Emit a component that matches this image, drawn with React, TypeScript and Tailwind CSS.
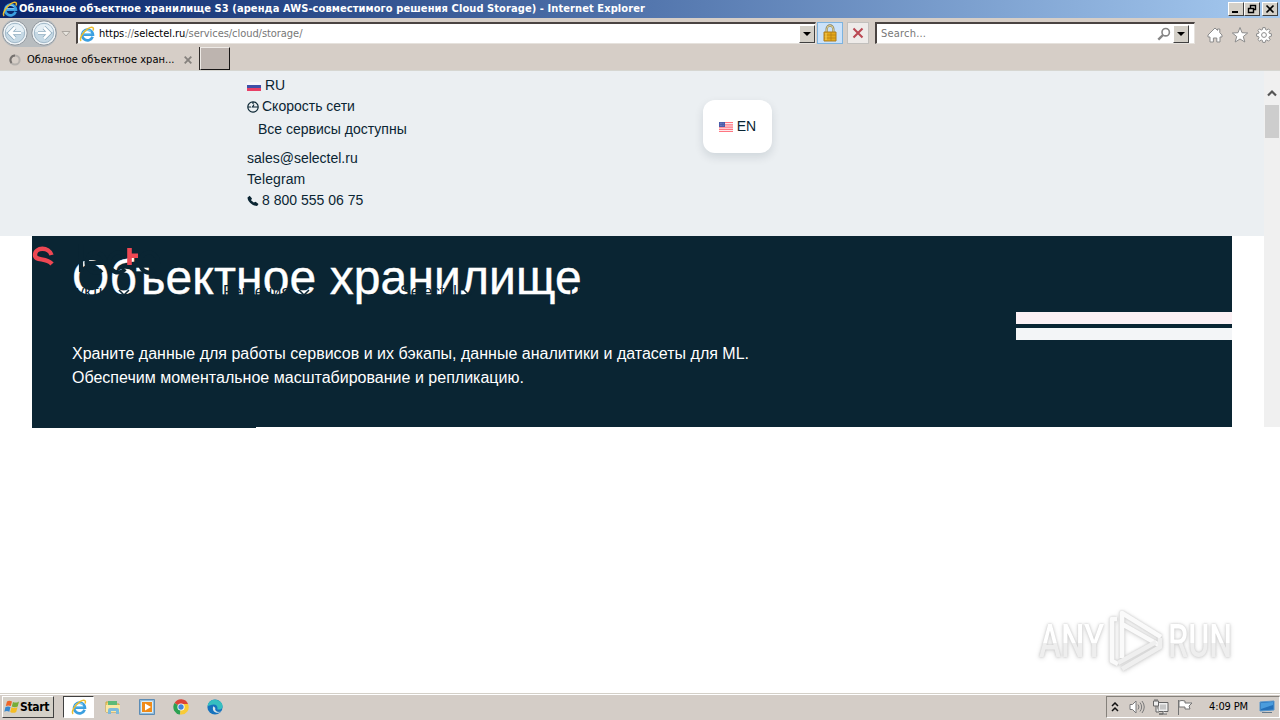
import type { ReactNode } from 'react';

const raised = 'border border-t-white border-l-white border-r-[#404040] border-b-[#404040] bg-[#d4d0c8]';

const IeLogo = ({ className = '' }: { className?: string }) => (
  <svg viewBox="0 0 16 16" className={`shrink-0 ${className}`} fill="none">
    <path d="M13.6 10.8A5.4 5.4 0 1 1 13.9 8.6H4.6" stroke="#3b9fe0" strokeWidth="2.7" />
    <path d="M4.3 7.7h8M3.5 6.5Q8 2.5 12 5.4" stroke="#8bd4f7" strokeWidth="1" />
    <path d="M2.2 14.8C-.2 13.6 3.3 6.2 9 2.6c3.8-2.4 6.4-1.6 5 2" stroke="#edbd2d" strokeWidth="1.5" />
  </svg>
);

const NavArrow = ({ flip = false }: { flip?: boolean }) => (
  <svg viewBox="0 0 26 26" className={flip ? 'size-[26px] -scale-x-100' : 'size-[26px]'}>
    <circle cx="13" cy="13" r="12.2" fill="#eef3f6" stroke="#8d949b" />
    <circle cx="13" cy="13" r="9.7" fill="#c6d9e5" stroke="#a1b8c8" />
    <path d="M4 12a9 8 0 0 1 18 0" fill="#e5eff5" />
    <path d="M13 7.5 7.5 13l5.5 5.5M8 13h11" fill="none" stroke="#8aa9bd" strokeWidth="4" />
    <path d="M13 7.5 7.5 13l5.5 5.5M8 13h11" fill="none" stroke="#fff" strokeWidth="2.6" />
  </svg>
);

const DropButton = () => (
  <span className={`flex h-[18px] w-4 items-center justify-center ${raised}`}>
    <svg viewBox="0 0 8 4" className="h-1 w-2"><path d="M0 0h8L4 4z" /></svg>
  </span>
);

const WindowButton = ({ children }: { children: ReactNode }) => (
  <span className={`flex h-[14px] w-4 items-center justify-center ${raised}`}>
    <svg viewBox="0 0 12 10" className="h-[10px] w-3" fill="none" stroke="#000">{children}</svg>
  </span>
);

const Chevron = () => (
  <svg viewBox="0 0 12 7" className="mt-[6px] h-[7px] w-3" fill="none" stroke="#0a2533" strokeWidth="1.6"><path d="m1 1 5 5 5-5" /></svg>
);

const TitleBar = () => (
  <div className="flex h-[18px] items-center bg-linear-to-r from-[#0a246a] to-[#a6caf0] pr-[2px] pl-[2px]">
    <IeLogo className="size-4" />
    <span className="ml-px w-[640px] text-[11px] leading-[18px] font-bold tracking-[0.085px] whitespace-nowrap text-white">
      Облачное объектное хранилище S3 (аренда AWS-совместимого решения Cloud Storage) - Internet Explorer
    </span>
    <div className="ml-auto flex">
      <WindowButton><path d="M2 8h6" strokeWidth="2" /></WindowButton>
      <WindowButton><path d="M4.5 4V1.5h5v4H8M4 1.5h6M2.5 4.5h5v4h-5zM2 4.5h6" strokeWidth="1.4" /></WindowButton>
      <span className="w-[2px]" />
      <WindowButton><path d="m2.5 1.5 7 7m0-7-7 7" strokeWidth="1.7" /></WindowButton>
    </div>
  </div>
);

const AddressBar = () => (
  <div className="flex h-[29px] items-start pt-1">
    <div className="-mt-[3px] ml-[2px] flex h-7 w-[55px] items-center justify-between rounded-full bg-[#b8bdc0]">
      <NavArrow />
      <NavArrow flip />
    </div>
    <svg viewBox="0 0 10 6" className="mt-[9px] ml-[4px] h-[6px] w-[10px]"><path d="M1 .5h8L5 5z" fill="#e8e5df" stroke="#aaa59f" /></svg>
    <div className="ml-[5px] flex h-[22px] w-[740px] items-center border-t-2 border-l-2 border-r border-b border-t-[#4a4442] border-l-[#4a4442] border-r-[#e6e2dd] border-b-[#e6e2dd] bg-white pl-px">
      <IeLogo className="size-4" />
      <span className="ml-[4px] pt-[2px] text-[11px] tracking-[-0.05px] whitespace-nowrap text-[#777]">
        <span className="text-black">https</span>://<span className="text-black">selectel.ru</span>/services/cloud/storage/
      </span>
      <span className="ml-auto"><DropButton /></span>
    </div>
    <div className="ml-px flex h-[22px] w-[26px] items-center justify-center border border-[#7db3df] bg-[#cbe2fa]">
      <svg viewBox="0 0 14 18" className="h-[18px] w-[14px]">
        <path d="M3.7 8V4.8a3.3 3.3 0 0 1 6.6 0V8" fill="none" stroke="#8a8060" strokeWidth="2.3" />
        <path d="M3.8 8V4.8a3.2 3.2 0 0 1 6.4 0V8" fill="none" stroke="#eadf9d" />
        <path d="M1 8h12v9H1z" fill="#e4a91b" stroke="#ad7d1c" />
        <path d="M1 11h12M1 14h12M8 8v9" stroke="#b88215" strokeWidth=".8" />
        <path d="M3 9v7" stroke="#f6d466" />
      </svg>
    </div>
    <div className="ml-1 flex h-[22px] w-[22px] items-center justify-center border border-[#c2c0bd] bg-[#eeebe9]">
      <svg viewBox="0 0 12 12" className="size-3"><path d="m1.5 1.5 9 9m0-9-9 9" stroke="#ba4853" strokeWidth="2.1" /></svg>
    </div>
    <div className="ml-[6px] flex h-[22px] w-[320px] items-center border-t-2 border-l-2 border-r border-b border-t-[#4a4442] border-l-[#4a4442] border-r-[#e6e2dd] border-b-[#e6e2dd] bg-white pl-[4px]">
      <span className="pt-[2px] text-[11px] tracking-[0.2px] text-[#777]">Search...</span>
      <svg viewBox="0 0 14 14" className="ml-auto size-[14px]" fill="none" stroke="#858585"><circle cx="8.7" cy="5.2" r="3.7" strokeWidth="1.6" /><path d="m6 8-4.7 4.7" strokeWidth="2.4" /></svg>
      <span className="mr-[5px] ml-[2px]"><DropButton /></span>
    </div>
    <div className="mt-[5px] ml-[12px] flex gap-[8px]">
      <svg viewBox="0 0 16 16" className="size-4" fill="#fff" stroke="#8b8b8b"><path d="M1 8 8 1l2.5 2.4V2h2.3v3.7L15 8v2h-2v5H9.8v-4H6.4v4H3v-5H1z" /></svg>
      <svg viewBox="0 0 18 18" className="-mt-px -mr-px size-[18px]" fill="#fff" stroke="#8b8b8b"><path d="m9 1.5 2 5.2 5.7.3-4.4 3.5 1.5 5.5L9 13l-4.8 3 1.5-5.5L1.3 7 7 6.7z" /></svg>
      <svg viewBox="0 0 16 16" className="size-4" fill="#fff" stroke="#8b8b8b"><path d="M6.8.6h2.4l.4 2 1.2.5 1.7-1.2 1.6 1.6-1.2 1.7.5 1.2 2 .4v2.4l-2 .4-.5 1.2 1.2 1.7-1.6 1.6-1.7-1.2-1.2.5-.4 2H6.8l-.4-2-1.2-.5-1.7 1.2-1.6-1.6 1.2-1.7-.5-1.2-2-.4V6.8l2-.4.5-1.2-1.2-1.7 1.6-1.6 1.7 1.2 1.2-.5z" /><circle cx="8" cy="8" r="2.4" /></svg>
    </div>
  </div>
);

const Tabs = () => (
  <div className="flex h-6 items-end border-b border-[#d6d6d1]">
    <div className="flex h-[23px] w-[200px] items-center border-r border-[#2d2927] pt-[2px] pl-[9px]">
      <svg viewBox="0 0 12 12" className="size-3" fill="none" strokeWidth="2"><circle cx="6" cy="6" r="4.6" stroke="#b4b0ac" /><path d="M2.6 9A4.6 4.6 0 0 1 6 1.4" stroke="#75716e" /></svg>
      <span className="ml-[6px] w-[157px] pt-px text-[11px] tracking-[0.03px] whitespace-nowrap text-black">Облачное объектное хран...</span>
      <svg viewBox="0 0 8 8" className="size-2 shrink-0"><path d="m.7.7 6.6 6.6m0-6.6L.7 7.3" stroke="#85817d" strokeWidth="1.8" /></svg>
    </div>
    <div className="h-[23px] w-[30px] border border-t-[#eeeae6] border-l-[#eeeae6] border-r-[#171515] border-b-[#171515] bg-[#bdb4af]" />
  </div>
);

const Page = () => (
  <main className="flex h-[622px] flex-col bg-white font-['Liberation_Sans',Arial,sans-serif] text-[#0a2533]">
    <div className="flex h-[356px]">
      <div className="w-[1264px]">
        <header className="flex h-[165px] items-start bg-[#ebeff2] pl-[247px] text-[14px] leading-[21px]">
          <div className="w-[456px] pt-1">
            <div className="flex items-center gap-1">
              <svg viewBox="0 0 14 9" className="mt-[2px] h-[9px] w-[14px]"><path fill="#f6f7fa" d="M0 0h14v3H0z" /><path fill="#3f50a8" d="M0 3h14v3H0z" /><path fill="#e83f66" d="M0 6h14v3H0z" /></svg>
              RU
            </div>
            <div className="flex items-center gap-[3px]">
              <svg viewBox="0 0 12 12" className="size-3" fill="none" stroke="#0a2533" strokeWidth="1.2"><circle cx="6" cy="6" r="5.2" /><path d="M1 6h3m7 0H5.5L7 3.5M6 1v2" /></svg>
              Скорость сети
            </div>
            <div className="mt-[2px] pl-[11px]">Все сервисы доступны</div>
            <div className="mt-2">sales@selectel.ru</div>
            <div className="tracking-[0.1px]">Telegram</div>
            <div className="flex items-center gap-[3px]">
              <svg viewBox="0 0 12 12" className="size-3" fill="#0a2533"><path d="M.5 2.5 2.7.8 5 3.5 4 5.2l2.8 2.4 1.8-.8 2.9 2.2-1.4 2C6 11 .6 7 .5 2.5z" /></svg>
              8 800 555 06 75
            </div>
          </div>
          <div className="mt-[29px] flex h-[53px] w-[69px] items-center justify-center gap-1 rounded-xl bg-white shadow-[0_4px_10px_#0a25331f]">
            <svg viewBox="0 0 14 10" className="h-[10px] w-[14px]"><path fill="#fde9ec" d="M0 0h14v10H0z" /><path d="M0 .5h14M0 2.8h14M0 5.1h14M0 7.4h14M0 9.5h14" stroke="#ff7681" strokeWidth="1.2" /><path fill="#4a5caa" d="M0 0h6v5H0z" /><path d="M1 1.3h4M1 3.4h4" stroke="#a8afe0" strokeWidth=".6" strokeDasharray=".7" /></svg>
            EN
          </div>
        </header>
        <section className="relative mr-8 ml-8 h-[191px] bg-[#0a2533] px-10 pt-[13px] text-white">
          <h1 className="text-[48px] leading-[58px] tracking-[0.1px] whitespace-nowrap [-webkit-text-stroke:0.4px_white]">Объектное хранилище</h1>
          <p className="mt-[35px] text-[16px] leading-6 tracking-[0.01px] whitespace-nowrap">
            Храните данные для работы сервисов и их бэкапы, данные аналитики и датасеты для ML.<br />
            Обеспечим моментальное масштабирование и репликацию.
          </p>
          <svg viewBox="0 0 130 50" className="absolute top-0 left-0 h-[50px] w-[130px]" fill="none">
            <path d="M49 8v28M54 27h19A9.2 10 0 1 0 70 34M93 20a9 10 0 1 0 0 13M108 27h18A9 10 0 1 0 123 34" stroke="#0a2533" strokeWidth="4.2" />
            <path d="M19.5 19C17 10.5 3 11 3 19c0 6.5 11 2 17 9" stroke="#ee4753" strokeWidth="4.4" />
            <path d="M97.5 12v17M99 19.7h7" stroke="#ee4753" strokeWidth="4.6" />
          </svg>
          <nav className="absolute top-[47px] left-[6px] flex text-[16px] leading-[18px] text-[#0a2533]">
            <span className="flex w-[185px] gap-2">Продукты <Chevron /></span>
            <span className="flex w-[177px] gap-2">Решения <Chevron /></span>
            <span className="flex w-[169px] gap-[6px]">Selectel <Chevron /></span>
            <span>Цены</span>
          </nav>
          <div className="absolute top-[76px] right-0 flex w-[216px] flex-col gap-1">
            <span className="h-3 bg-[#fbf0f4]" />
            <span className="h-3 bg-[#f3f5f7]" />
          </div>
          <span className="absolute top-[191px] left-0 h-px w-[224px] bg-[#0a2533]" />
        </section>
      </div>
      <div className="flex w-4 flex-col items-center bg-[#f0f0f0] pt-[18px]">
        <svg viewBox="0 0 10 8" className="h-2 w-[10px]"><path d="m1 6.5 4-4 4 4" fill="none" stroke="#555" strokeWidth="2.2" /></svg>
        <div className="mt-2 h-[33px] w-[14px] bg-[#cdcdcd]" />
      </div>
    </div>
    <div className="mt-[182px] ml-[1039px] flex h-[64px] items-center font-['Roboto',sans-serif] text-[46px] font-medium text-transparent [filter:drop-shadow(0_0_1px_#c8c8c8)_drop-shadow(0_1px_2px_#ddd)]">
      <span className="w-[69px]"><span className="inline-block origin-left scale-x-[0.72] bg-linear-to-b from-white from-52% to-[#eee] to-52% bg-clip-text">ANY</span></span>
      <svg viewBox="0 0 60 64" className="h-[64px] w-[60px] shrink-0" fill="none" stroke="#fafafa" strokeWidth="4.6" strokeLinejoin="round">
        <path d="M14 49V4l39 24M14 15l37 21" />
        <path d="M9 10H4v42l6 3" />
        <path d="m14 60 38-22V29M10 54l38-21" stroke="#efefef" />
      </svg>
      <span className="w-[70px]"><span className="inline-block origin-left scale-x-[0.7] bg-linear-to-b from-white from-52% to-[#eee] to-52% bg-clip-text">RUN</span></span>
    </div>
  </main>
);

const Taskbar = () => (
  <footer className="flex h-[27px] items-center border-t border-[#d4d0c8] bg-[#d4cdc7] shadow-[inset_0_1px_#fff]">
    <div className={`ml-[2px] flex h-[22px] w-[52px] items-center ${raised}`}>
      <svg viewBox="0 0 16 16" className="ml-px size-4 shrink-0">
        <path d="M3 2.5q2-1.4 5 0L6.8 7q-2.5-1.2-5 0z" fill="#ee6528" /><path d="M9 3q2.8 1.4 6-.6l-1.3 5Q11 9 7.8 7.5z" fill="#76ad39" />
        <path d="M1.5 8q2.5-1.2 5 0l-1.2 4.7q-2.5-1.3-5 0z" fill="#3687cf" /><path d="M7.5 8.3q2.7 1.4 6 0L12.2 13q-3 1.7-6 0z" fill="#f5bd24" />
      </svg>
      <span className="text-[12px] font-bold tracking-[-0.35px]">Start</span>
    </div>
    <div className="ml-[9px] flex h-[22px] w-[31px] items-center justify-center border border-t-[#404040] border-l-[#404040] border-r-white border-b-white bg-white"><IeLogo className="size-4" /></div>
    <svg viewBox="0 0 16 16" className="ml-[11px] size-4"><path d="M1 3h5l1 2h7v8H1z" fill="#f4d776" stroke="#c9a43e" /><path d="M3 2h9v4H3z" fill="#5bb978" /><path d="M1 6h14v7H1z" fill="#f9e7a4" /><path d="M3 15v-4q0-2 2-2h7q2 0 2 2v4h-3v-3H6v3z" fill="#7cbadb" /></svg>
    <svg viewBox="0 0 16 16" className="ml-[18px] size-4"><path d="M.5.5h15v15H.5z" fill="#92bbd9" stroke="#5c8cb5" /><path d="M2.5 2.5h11v11h-11z" fill="#ef8b19" stroke="#d8edfa" /><path d="m6 4.5 6 3.5-6 3.5z" fill="#fff" /></svg>
    <svg viewBox="0 0 16 16" className="ml-[18px] size-4"><path d="M8 8 1.5 4A7.5 7.5 0 0 1 15 5z" fill="#dc4438" /><path d="m8 8-6.5-4A7.5 7.5 0 0 0 7 15.5z" fill="#2ca152" /><path d="m8 8-1 7.5A7.5 7.5 0 0 0 15 5H8z" fill="#f9cb36" /><circle cx="8" cy="8" r="3.6" fill="#fff" /><circle cx="8" cy="8" r="2.7" fill="#4285dc" /></svg>
    <svg viewBox="0 0 16 16" className="ml-[18px] size-4"><circle cx="8" cy="8" r="7.6" fill="#1672bd" /><path d="M.6 7C2-2 15-.5 15.6 7c.2 4-3.8 4-5.5 3.2 1.2-1.5-.4-4.6-3.3-4.6C4 5.6 2 7 .6 7z" fill="#36bfc0" /><path d="M6.4 7.2C4 12 10 15.8 14 12.6c-3 1.2-6.8-.4-5.6-3.5z" fill="#d9e5e9" /></svg>
    <div className="ml-auto flex h-[22px] w-[174px] items-center border border-t-[#85817b] border-l-[#85817b] border-r-white border-b-white pl-1">
      <svg viewBox="0 0 8 10" className="h-[10px] w-2" fill="none" stroke="#111" strokeWidth="1.5"><path d="m1 4 3-3 3 3M1 9l3-3 3 3" /></svg>
      <svg viewBox="0 0 16 16" className="ml-[10px] size-4" fill="none" stroke="#79797a"><path d="M1 5.5h2.5L7 2v12l-3.5-3.5H1z" fill="#fff" /><path d="M9 5.5q2 2.5 0 5M11 3.5q3.3 4.5 0 9M13 2q4.5 6 0 12" /></svg>
      <svg viewBox="0 0 16 16" className="ml-2 size-4" fill="#eee" stroke="#646464"><path d="M5 3.5h10v9H5z" /><path d="M7 5.5h6v5H7z" fill="#c5c5c5" stroke="none" /><path d="M10 12v3H6h8M.5 2h5v5h-5zM2 0v2m2-2v2M3 7v6h3" /></svg>
      <svg viewBox="0 0 16 16" className="ml-2 size-4" fill="#fff" stroke="#747474"><path d="M1.5 1v15M2 2q3-1 6 0v2h7l-3 3 1 3H8V8H2z" /></svg>
      <span className="ml-[16px] w-[48px] text-[11px] tracking-[-0.12px] whitespace-nowrap">4:09 PM</span>
      <svg viewBox="0 0 16 14" className="ml-[2px] h-[14px] w-4"><path d="M1 2 15 1v9L1 11z" fill="#2470b9" stroke="#5997cd" /><path d="m2 3 12-1v3L2 9z" fill="#4a9cdd" /><path d="M3 12.5h10" stroke="#65798b" /></svg>
    </div>
  </footer>
);

export default function App() {
  return (
    <div className="h-[720px] w-[1280px] overflow-hidden bg-[#d6cec7] font-['DejaVu_Sans_Condensed','DejaVu_Sans',sans-serif] text-black">
      <TitleBar />
      <AddressBar />
      <Tabs />
      <Page />
      <Taskbar />
    </div>
  );
}
